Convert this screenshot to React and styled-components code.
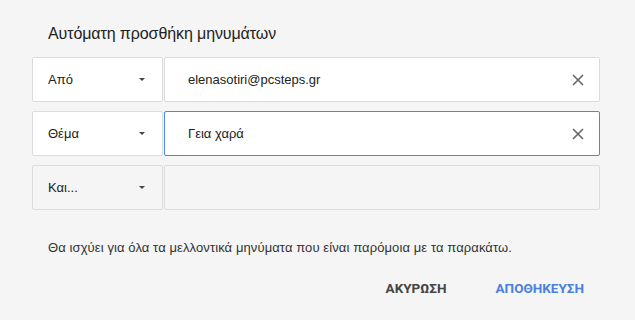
import React from "react";
import styled, { createGlobalStyle } from "styled-components";

const Global = createGlobalStyle`
  html, body { margin: 0; padding: 0; background: #f5f5f5; }
  body { font-family: "Liberation Sans", Arial, sans-serif; }
`;

const Dialog = styled.div`
  width: 635px;
  height: 320px;
  box-sizing: border-box;
  padding: 24px 35px 0 32px;
  background: #f5f5f5;
`;

const Title = styled.div`
  font-size: 16px;
  line-height: 20px;
  color: #222;
  padding-left: 16px;
  margin-bottom: 13px;
  letter-spacing: -0.1px;
`;

const Rows = styled.div`
  display: flex;
  flex-direction: column;
  gap: 9px;
`;

const Row = styled.div`
  display: grid;
  grid-template-columns: 131px 1fr;
  height: 45px;
`;

const Select = styled.div`
  box-sizing: border-box;
  display: flex;
  align-items: center;
  justify-content: space-between;
  padding: 0 17px 0 15px;
  border: 1px solid #dcdcdc;
  border-radius: 2px;
  background: ${(p) => (p.$empty ? "#f5f5f5" : "#fff")};
  font-size: 13px;
  color: #222;
`;

const Caret = styled.span`
  width: 0;
  height: 0;
  border-left: 3px solid transparent;
  border-right: 3px solid transparent;
  border-top: 3px solid #444;
`;

const Field = styled.div`
  box-sizing: border-box;
  display: flex;
  align-items: center;
  justify-content: space-between;
  padding: 0 15px 0 23px;
  margin-left: 1px;
  border: 1px solid ${(p) => (p.$focus ? "#4a86f0" : "#dcdcdc")};
  border-radius: 2px;
  background: ${(p) => (p.$empty ? "#f5f5f5" : "#fff")};
  font-size: 13px;
  color: #222;
`;

const Clear = styled.svg`
  width: 12px;
  height: 12px;
  flex: none;
`;

const Note = styled.div`
  margin-top: 30px;
  padding-left: 16px;
  font-size: 13px;
  line-height: 16px;
  letter-spacing: 0.1px;
  color: #333;
`;

const Actions = styled.div`
  display: flex;
  justify-content: flex-end;
  gap: 49px;
  margin-top: 24px;
  padding-right: 16px;
`;

const Button = styled.button`
  border: 0;
  background: none;
  padding: 0;
  font-family: Roboto, "Liberation Sans", Arial, sans-serif;
  font-weight: 700;
  font-size: 13.5px;
  line-height: 16px;
  color: ${(p) => (p.$primary ? "#4a80e0" : "#444")};
  cursor: pointer;
`;

const X = () => (
  <Clear viewBox="0 0 12 12">
    <path d="M1 1L11 11M11 1L1 11" stroke="#666" strokeWidth="1.6" />
  </Clear>
);

export default function App() {
  return (
    <>
      <Global />
      <Dialog>
        <Title>Αυτόματη προσθήκη μηνυμάτων</Title>
        <Rows>
          <Row>
            <Select>
              <span>Από</span>
              <Caret />
            </Select>
            <Field>
              <span>elenasotiri@pcsteps.gr</span>
              <X />
            </Field>
          </Row>
          <Row>
            <Select>
              <span>Θέμα</span>
              <Caret />
            </Select>
            <Field $focus>
              <span>Γεια χαρά</span>
              <X />
            </Field>
          </Row>
          <Row>
            <Select $empty>
              <span>Και...</span>
              <Caret />
            </Select>
            <Field $empty />
          </Row>
        </Rows>
        <Note>Θα ισχύει για όλα τα μελλοντικά μηνύματα που είναι παρόμοια με τα παρακάτω.</Note>
        <Actions>
          <Button>ΑΚΥΡΩΣΗ</Button>
          <Button $primary>ΑΠΟΘΗΚΕΥΣΗ</Button>
        </Actions>
      </Dialog>
    </>
  );
}
